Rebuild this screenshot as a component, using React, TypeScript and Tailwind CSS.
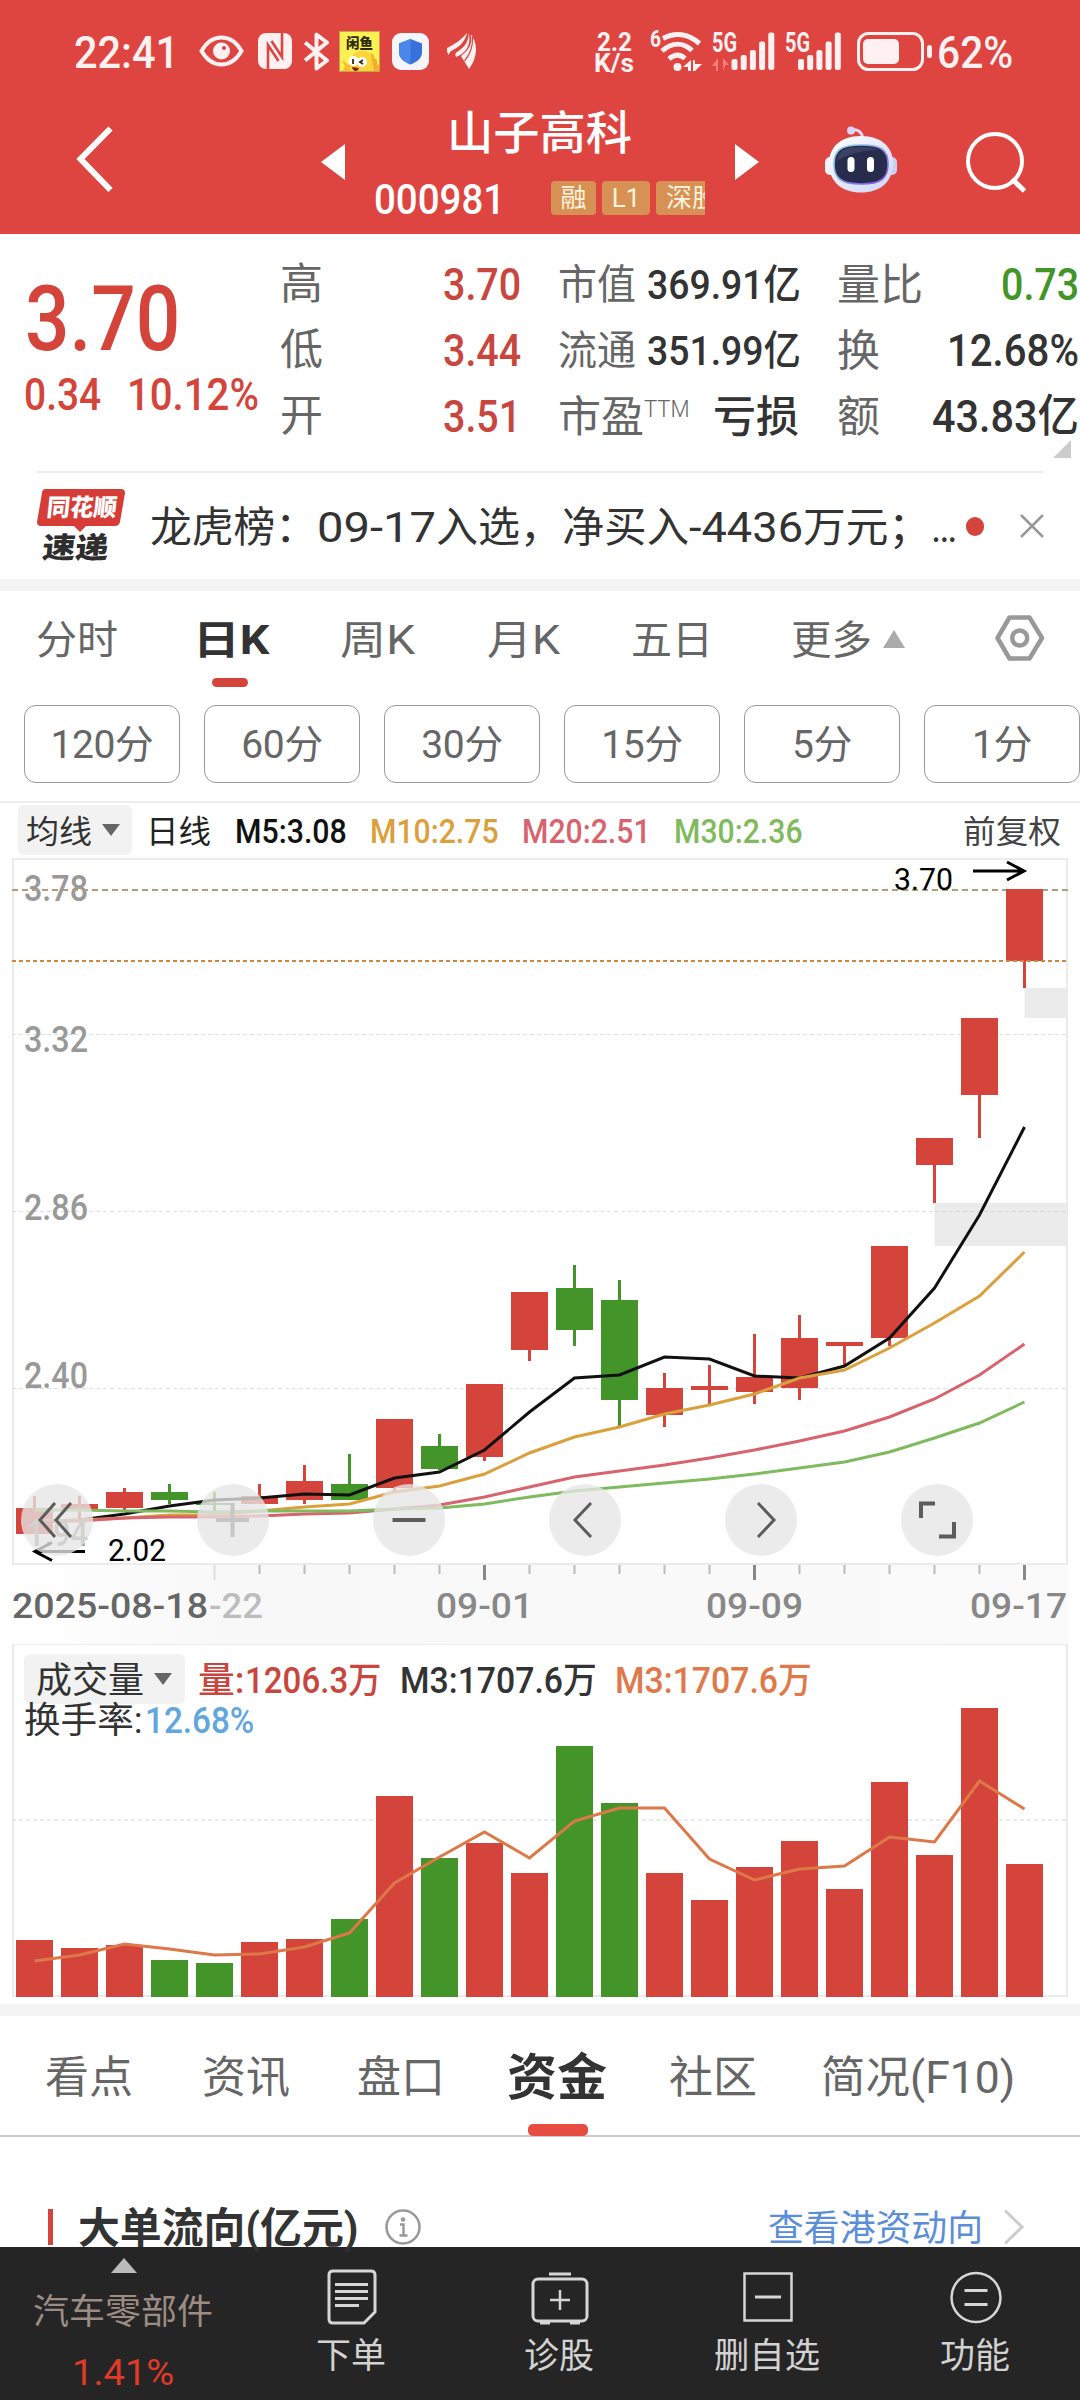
import React, { useLayoutEffect, useRef, useState } from 'react'

interface fitProps {
    className?: string;
    children: React.ReactNode;
}

// squeezes a single line of text into the width of its box
const Fit: React.FC<fitProps> = ({ className, children }) => {
    const box = useRef<HTMLSpanElement>(null);
    const text = useRef<HTMLSpanElement>(null);
    const [scale, setScale] = useState(1);

    useLayoutEffect(() => {
        if (box.current && text.current) {
            setScale(box.current.clientWidth / text.current.offsetWidth);
        }
    }, []);

    return (
        <span ref={box} className={`block shrink-0 whitespace-nowrap ${className}`}>
            <span ref={text} className="relative top-[1.5px] -left-px inline-block origin-left" style={{ transform: `scaleX(${scale})` }}>
                {children}
            </span>
        </span>
    );
};

const RED = '#d5443a';
const GREEN = '#43952a';

// open/close body top and bottom, then wick top and bottom
const candles = [
    { up: true, top: 1508, bottom: 1534, high: 1496, low: 1534 },
    { up: true, top: 1504, bottom: 1510, high: 1496, low: 1522 },
    { up: true, top: 1492, bottom: 1508, high: 1488, low: 1510 },
    { up: false, top: 1492, bottom: 1500, high: 1484, low: 1504 },
    { up: false, top: 1503, bottom: 1505, high: 1492, low: 1511 },
    { up: true, top: 1496, bottom: 1504, high: 1484, low: 1504 },
    { up: true, top: 1481, bottom: 1500, high: 1465, low: 1504 },
    { up: false, top: 1484, bottom: 1500, high: 1454, low: 1500 },
    { up: true, top: 1419, bottom: 1488, high: 1419, low: 1491 },
    { up: false, top: 1446, bottom: 1469, high: 1434, low: 1470 },
    { up: true, top: 1384, bottom: 1457, high: 1384, low: 1461 },
    { up: true, top: 1292, bottom: 1350, high: 1292, low: 1361 },
    { up: false, top: 1288, bottom: 1330, high: 1265, low: 1346 },
    { up: false, top: 1300, bottom: 1400, high: 1280, low: 1427 },
    { up: true, top: 1388, bottom: 1415, high: 1373, low: 1427 },
    { up: true, top: 1386, bottom: 1390, high: 1365, low: 1404 },
    { up: true, top: 1377, bottom: 1392, high: 1334, low: 1404 },
    { up: true, top: 1338, bottom: 1388, high: 1315, low: 1400 },
    { up: true, top: 1342, bottom: 1346, high: 1342, low: 1367 },
    { up: true, top: 1246, bottom: 1338, high: 1246, low: 1346 },
    { up: true, top: 1138, bottom: 1165, high: 1138, low: 1203 },
    { up: true, top: 1018, bottom: 1095, high: 1018, low: 1138 },
    { up: true, top: 889, bottom: 961, high: 889, low: 988 },
];

const averages = [
    { color: '#111111', points: [1522, 1520, 1514, 1506, 1500, 1498, 1494, 1495, 1478, 1472, 1450, 1412, 1378, 1375, 1357, 1359, 1376, 1378, 1366, 1338, 1288, 1215, 1127] },
    { color: '#dba03c', points: [1521, 1520, 1518, 1515, 1515, 1511, 1507, 1504, 1492, 1486, 1474, 1453, 1437, 1427, 1414, 1405, 1394, 1378, 1370, 1348, 1323, 1296, 1252] },
    { color: '#d8636f', points: [1521, 1521, 1518, 1517, 1517, 1516, 1514, 1513, 1509, 1505, 1497, 1487, 1477, 1471, 1465, 1458, 1450, 1441, 1431, 1417, 1399, 1375, 1344] },
    { color: '#7fbb5e', points: [1510, 1510, 1511, 1511, 1512, 1511, 1511, 1511, 1509, 1508, 1504, 1497, 1491, 1487, 1483, 1479, 1474, 1468, 1462, 1452, 1438, 1423, 1402] },
];

const volumes = [1940, 1948, 1945, 1960, 1963, 1942, 1939, 1919, 1796, 1858, 1843, 1873, 1746, 1803, 1873, 1900, 1867, 1841, 1889, 1782, 1855, 1708, 1864];
const volumeLine = [1961, 1955, 1944, 1949, 1955, 1954, 1947, 1933, 1883, 1857, 1832, 1858, 1821, 1808, 1808, 1859, 1880, 1869, 1866, 1837, 1842, 1781, 1809];

const center = (i: number) => 34.5 + i * 45;
const toPoints = (list: number[]) => list.map((y, i) => `${center(i)},${y}`).join(' ');

const Signal = ({ dim }: { dim?: boolean }) => (
    <svg width={dim ? 62 : 56} height="40" viewBox={dim ? '0 0 62 40' : '0 0 56 40'} fill="#fff1f1" className="shrink-0 overflow-visible">
        <text x="0" y="21" fontSize="27" fontWeight="700" textLength="25" lengthAdjust="spacingAndGlyphs">5G</text>
        {dim && <path fill="#f07f7d" d="M6 27v13h-2v-5H0zM11 27l6 7h-3v-1l-3 7z" />}
        <g transform={dim ? 'translate(19.5 0)' : 'translate(13 0)'}>
            <rect x="0" y="28" width="6" height="11" rx="2" />
            <rect x="9.2" y="24" width="6" height="15" rx="2" />
            <rect x="18.4" y="19" width="6" height="20" rx="2" />
            <rect x="27.6" y="10.5" width="6" height="28.5" rx="2" />
            <rect x="36.8" y="1.5" width="6" height="37.5" rx="2" />
        </g>
    </svg>
);

const StatusBar = () => (
    <div className="flex h-[102px] items-center pl-[75px] text-[#fff1f1]">
        <Fit className="w-[105px] text-[45px] leading-[60px] font-medium">22:41</Fit>
        <svg width="45" height="32" viewBox="0 0 45 32" className="ml-[19px] shrink-0">
            <path d="M2.5 16C8 6.5 15 2.5 22.5 2.5S37 6.5 42.5 16C37 25.5 30 29.5 22.5 29.5S8 25.5 2.5 16z" fill="none" stroke="#fff1f1" strokeWidth="4" />
            <circle cx="22.5" cy="16" r="8.5" fill="#fff1f1" />
            <circle cx="25" cy="13" r="2" fill="#de4440" />
        </svg>
        <svg width="34" height="36" viewBox="0 0 34 36" className="ml-[14px] shrink-0">
            <rect width="34" height="36" rx="8" fill="#fff1f1" />
            <path d="M10 36V12L20.5 28M24 0V24L13.5 8" fill="none" stroke="#de4440" strokeWidth="2.6" />
        </svg>
        <svg width="26" height="39" viewBox="0 0 26 39" fill="none" stroke="#fff1f1" strokeWidth="4" strokeLinejoin="round" className="ml-[12px] shrink-0">
            <path d="M1 10.5l22 18L12.5 36.500v-34L23 10.5 1 28.500" />
        </svg>
        <div className="relative ml-[9px] h-[41px] w-[41px] shrink-0 overflow-hidden border border-[#c9a24a] bg-[#fdf052]">
            <Fit className="ml-[7px] w-[27px] text-[14px] leading-[20px] font-black text-[#2c2a10]">闲鱼</Fit>
            <svg width="41" height="41" viewBox="0 0 41 41" className="absolute -top-px -left-px">
                <path d="M10 41C9 30 12 21 23 19.5 32 20 38 27 39 41z" fill="#fbd437" />
                <path d="M32 22l3 2v3l3 2v4l3 2v6h-6z" fill="#f6ae2e" />
                <path d="M3 30c3 0 5 3 8 5v6H3l3-6z" fill="#f8bc30" />
                <circle cx="14.5" cy="30" r="5" fill="#fff" />
                <circle cx="23" cy="31" r="5" fill="#fff" />
                <path d="M14 28v5M24 29l-3 2 3 2" stroke="#33270d" strokeWidth="1.8" fill="none" />
                <path d="M13 36l7 1c-1 4-6 4-7-1z" fill="#7c1d0c" />
            </svg>
        </div>
        <svg width="37" height="37" viewBox="0 0 37 37" className="ml-[12px] shrink-0">
            <rect width="37" height="37" rx="9" fill="#f5f6fb" />
            <path d="M18.5 6L30 10.5v9C30 25 25 29 18.5 31.5 12 29 7 25 7 19.5v-9z" fill="#3671dc" />
            <path d="M18.5 6v25.5C12 29 7 25 7 19.5v-9z" fill="#4a87ea" />
        </svg>
        <svg width="30" height="36" viewBox="0 0 30 36" className="ml-[18px] shrink-0" fill="#fff1f1">
            <path d="M0 15C8 11 14 7 20 0 18 9 12 14 6 17c-3 1-4 3-4 5C0 20-.5 17 0 15z" />
            <path d="M21.500 0C22 8 18 14 10 19c-2 1-2 3-1 5C18 21 25 12 21.500 0z" />
            <path d="M23.500 1C26 10 22 17 14 23l8 13c8-11 10-25 1.500-35z" />
            <path d="M25.500 4c.5 10-2 17-8 24" stroke="#de4440" strokeWidth="1.2" fill="none" />
        </svg>
        <div className="ml-[118px] w-[39px] shrink-0 text-[25px] leading-[21px] font-bold">
            <Fit className="ml-[3px] w-[35px]">2.2</Fit>
            <Fit className="w-[40px]">K/s</Fit>
        </div>
        <svg width="52" height="41" viewBox="0 0 52 41" className="ml-[16px] shrink-0 overflow-visible" fill="none" stroke="#fff1f1" strokeWidth="5">
            <text x="0" y="16" fontSize="23" fontWeight="700" stroke="none" fill="#fff1f1" textLength="11" lengthAdjust="spacingAndGlyphs">6</text>
            <path d="M13 7.5C25 1 38 2.500 49.500 12.500" />
            <path d="M12 20C22 11 33 11 42 19.500" />
            <path d="M19 28C24.500 23 30 23 35 27.500" />
            <circle cx="27.5" cy="36" r="4" fill="#fff1f1" stroke="none" />
            <path d="M41 29v11h-3v-4h-5zM43 29h2v4h7l-7 7h-2z" fill="#fff1f1" stroke="none" />
        </svg>
        <div className="ml-[10px] flex">
            <Signal dim />
        </div>
        <div className="ml-[11px] flex">
            <Signal />
        </div>
        <svg width="75" height="39" viewBox="0 0 75 39" className="ml-[16px] shrink-0">
            <rect x="1.5" y="1.5" width="64" height="36" rx="10" fill="none" stroke="#fff1f1" strokeWidth="3" />
            <rect x="6" y="7" width="36" height="25" rx="5" fill="#fff1f1" />
            <rect x="70" y="13" width="5" height="13" rx="2.5" fill="#fff1f1" />
        </svg>
        <Fit className="ml-[6px] w-[76px] text-[45px] leading-[60px] font-medium">62%</Fit>
    </div>
);

const Robot = () => (
    <svg width="72" height="68" viewBox="0 0 72 68" className="shrink-0">
        <defs>
            <linearGradient id="shell" x1="0" y1="0" x2="1" y2="1">
                <stop offset="0" stopColor="#ffffff" />
                <stop offset="1" stopColor="#cdd3f4" />
            </linearGradient>
            <linearGradient id="rim" x1="0" y1="0" x2="1" y2="1">
                <stop offset="0" stopColor="#8fe0e8" />
                <stop offset="1" stopColor="#7a4be0" />
            </linearGradient>
        </defs>
        <path d="M27 4c6-1 10 2 10.500 8" fill="none" stroke="#e6dcf6" strokeWidth="3" />
        <circle cx="26" cy="4.5" r="4" fill="#dcd3f6" />
        <rect x="0" y="31" width="11" height="18" rx="5" fill="#eef0fd" />
        <rect x="61" y="31" width="11" height="18" rx="5" fill="#c9cff0" />
        <path d="M36 10C56 10 68 21 68 37 68 56 55 66.500 36 66.500S4 56 4 37C4 21 16 10 36 10z" fill="url(#shell)" />
        <path d="M36 19C56 19 63 24 63 38S56 58 36 58 9 52 9 38 16 19 36 19z" fill="#272c4d" stroke="url(#rim)" strokeWidth="1.6" />
        <path d="M12 35C13 24 20 21 36 21c6 0 13 1 17 3-16 0-30 4-41 11z" fill="#4a5071" opacity=".6" />
        <rect x="22.5" y="31" width="7" height="15" rx="3.5" fill="#fff" />
        <rect x="42" y="31" width="7" height="15" rx="3.5" fill="#fff" />
    </svg>
);

const TitleBar = () => (
    <div className="flex h-[132px] items-start text-white">
        <svg width="40" height="70" viewBox="0 0 40 70" className="mt-[22px] ml-[75px] shrink-0" fill="none" stroke="#fff" strokeWidth="6">
            <path d="M35.500 4.500L5.500 35 35.500 66" />
        </svg>
        <svg width="24" height="36" viewBox="0 0 24 36" className="mt-[42px] ml-[206px] shrink-0" fill="#fff">
            <path d="M24 0v36L0 18z" />
        </svg>
        <div className="ml-[30px] w-[330px] shrink-0">
            <Fit className="ml-[73px] w-[185px] text-[46px] leading-[58px] font-medium">山子高科</Fit>
            <div className="mt-[9px] flex h-[58px] items-center">
                <Fit className="w-[131px] text-[42px] leading-[58px] font-medium">000981</Fit>
                <div className="ml-[45px] flex w-[154px] gap-[6px] overflow-hidden text-[26px] leading-[34px] whitespace-nowrap text-[#fff3df]">
                    <span className="w-[45px] shrink-0 rounded-[4px] bg-[#d79154] text-center">融</span>
                    <span className="w-[48px] shrink-0 rounded-[4px] bg-[#d79154] text-center">L1</span>
                    <span className="w-[98px] shrink-0 rounded-[4px] bg-[#d79154] pl-[10px]">深股通</span>
                </div>
            </div>
        </div>
        <svg width="24" height="36" viewBox="0 0 24 36" className="mt-[42px] ml-[30px] shrink-0" fill="#fff">
            <path d="M0 0v36l24-18z" />
        </svg>
        <div className="mt-[24px] ml-[66px]">
            <Robot />
        </div>
        <svg width="62" height="64" viewBox="0 0 62 64" className="mt-[28px] ml-[68px] shrink-0" fill="none" stroke="#fff" strokeWidth="4">
            <circle cx="30" cy="31" r="27" />
            <path d="M47 49l12.500 12" strokeWidth="5" />
        </svg>
    </div>
);

const Quote = () => (
    <div className="flex h-[237px] text-[#333]">
        <div className="ml-[24px] w-[256px] shrink-0 text-[#d5443a]">
            <Fit className="mt-[34px] ml-[2px] w-[155px] text-[90px] leading-[100px] font-medium">3.70</Fit>
            <div className="-mt-[4px] flex text-[45px] leading-[58px] font-medium">
                <Fit className="ml-px w-[77px]">0.34</Fit>
                <Fit className="ml-[26px] w-[132px]">10.12%</Fit>
            </div>
        </div>
        <div className="mt-[17px] w-[43px] shrink-0 text-[43px] leading-[66px] text-[#666]">
            <p>高</p>
            <p>低</p>
            <p>开</p>
        </div>
        <div className="mt-[16px] ml-[121px] w-[77px] shrink-0 text-[45px] leading-[66px] font-medium text-[#c9463e]">
            <Fit className="w-[78px]">3.70</Fit>
            <Fit className="w-[78px]">3.44</Fit>
            <Fit className="w-[78px]">3.51</Fit>
        </div>
        <div className="mt-[16px] ml-[38px] w-[243px] shrink-0 text-[41px] leading-[66px] font-medium">
            <div className="flex justify-between">
                <Fit className="w-[78px] font-normal text-[#666]">市值</Fit>
                <Fit className="w-[154px]">369.91亿</Fit>
            </div>
            <div className="flex justify-between">
                <Fit className="w-[78px] font-normal text-[#666]">流通</Fit>
                <Fit className="w-[154px]">351.99亿</Fit>
            </div>
            <div className="flex text-[43px]">
                <Fit className="w-[86px] font-normal text-[#666]">市盈</Fit>
                <Fit className="h-[50px] w-[46px] text-[24px] leading-[51px] font-light text-[#666]">TTM</Fit>
                <Fit className="ml-[23px] w-[86px]">亏损</Fit>
            </div>
        </div>
        <div className="mt-[16px] ml-[36px] w-[242px] shrink-0 text-[43px] leading-[66px] font-medium">
            <div className="flex justify-between">
                <Fit className="w-[86px] font-normal text-[#666]">量比</Fit>
                <Fit className="w-[78px] text-[45px] text-[#43952a]">0.73</Fit>
            </div>
            <div className="flex justify-between">
                <Fit className="w-[43px] font-normal text-[#666]">换</Fit>
                <Fit className="w-[132px] text-[45px]">12.68%</Fit>
            </div>
            <div className="flex justify-between">
                <Fit className="w-[43px] font-normal text-[#666]">额</Fit>
                <Fit className="w-[147px] text-[45px]">43.83亿</Fit>
            </div>
            <svg width="18" height="18" viewBox="0 0 18 18" className="mt-[-8px] ml-[215px]" fill="#ccc">
                <path d="M18 0v18H0z" />
            </svg>
        </div>
    </div>
);

const News = () => (
    <div className="mx-[36px] flex h-[108px] items-center border-t-2 border-[#eee]">
        <div className="relative h-[74px] w-[90px] shrink-0">
            <svg width="90" height="46" viewBox="0 0 90 46" className="absolute top-0 left-0" fill="#d63d37">
                <path d="M10 0h75q4 0 4 4l-5 29q-1 4-5 4H50l-6 6-6-6H5q-4 0-4-4L6 4q0-4 4-4z" />
            </svg>
            <div className="relative -skew-x-6 pt-[4px] pl-[10px]">
                <Fit className="w-[70px] text-[24px] leading-[26px] font-black text-white">同花顺</Fit>
                <Fit className="mt-[11px] w-[66px] text-[29px] leading-[32px] font-black text-[#2e2e2e]">速递</Fit>
            </div>
        </div>
        <div className="ml-[25px] flex text-[42px] leading-[60px] text-[#333]">
            <Fit className="w-[167px]">龙虎榜：</Fit>
            <Fit className="w-[119px]">09-17</Fit>
            <Fit className="w-[126px]">入选，</Fit>
            <Fit className="w-[127px]">净买入</Fit>
            <Fit className="w-[114px]">-4436</Fit>
            <Fit className="w-[128px]">万元；</Fit>
            <Fit className="w-[26px]">…</Fit>
        </div>
        <span className="ml-[8px] h-[19px] w-[18px] shrink-0 rounded-full bg-[#d5443a]"></span>
        <svg width="24" height="24" viewBox="0 0 24 24" className="ml-[36px] shrink-0" stroke="#999" strokeWidth="2.5">
            <path d="M1 1l22 22M23 1L1 23" />
        </svg>
    </div>
);

const PeriodTabs = () => (
    <div className="flex h-[98px] pl-[37px] text-[40px] leading-[96px] text-[#666]">
        <Fit className="w-[82px]">分时</Fit>
        <div className="ml-[75px] w-[74px] shrink-0">
            <Fit className="w-[76px] font-bold text-[#333]">日K</Fit>
            <div className="mt-[-9px] ml-[18px] h-[9px] w-[36px] rounded-full bg-[#d5443a]"></div>
        </div>
        <Fit className="ml-[73px] w-[75px]">周K</Fit>
        <Fit className="ml-[72px] w-[73px]">月K</Fit>
        <Fit className="ml-[71px] w-[82px]">五日</Fit>
        <Fit className="ml-[78px] w-[81px]">更多</Fit>
        <svg width="22" height="18" viewBox="0 0 22 18" className="mt-[39px] ml-[10px] shrink-0" fill="#aaa">
            <path d="M11 0l11 18H0z" />
        </svg>
        <svg width="50" height="46" viewBox="0 0 50 46" className="mt-[24px] ml-[90px] shrink-0" fill="none" stroke="#999" strokeWidth="4.500" strokeLinejoin="round">
            <path d="M14.500 2.500h20L47 23 34.500 43.500h-20L2.500 23z" />
            <circle cx="24.700" cy="23" r="7.500" />
        </svg>
    </div>
);

const MinuteTabs = () => {
    const items = ['120分', '60分', '30分', '15分', '5分', '1分'];

    return (
        <div className="mt-[16px] flex h-[78px] gap-6 pl-6">
            {items.map((item) => (
                <div key={item} className="flex w-[156px] shrink-0 items-center justify-center rounded-[12px] border border-[#999] pt-[3px] text-[39px] tracking-[-0.5px] text-[#666]">
                    {item}
                </div>
            ))}
        </div>
    );
};

const Legend = () => (
    <div className="mt-[18px] flex h-[57px] items-center border-t-2 border-[#eee] pb-px pl-[18px] text-[33px] leading-[50px] font-medium">
        <div className="flex h-[50px] w-[114px] shrink-0 items-center rounded-[6px] bg-[#f2f2f2] pl-[9px]">
            <Fit className="w-[66px] text-[32px] font-normal text-[#333]">均线</Fit>
            <svg width="18" height="12" viewBox="0 0 18 12" className="ml-[9px]" fill="#666">
                <path d="M0 0h18L9 12z" />
            </svg>
        </div>
        <Fit className="ml-[15px] w-[65px] text-[32px] font-normal text-[#222]">日线</Fit>
        <Fit className="ml-[24px] w-[112px] text-[#111]">M5:3.08</Fit>
        <Fit className="ml-[23px] w-[129px] text-[#dba03c]">M10:2.75</Fit>
        <Fit className="ml-[23px] w-[129px] text-[#d8636f]">M20:2.51</Fit>
        <Fit className="ml-[23px] w-[129px] text-[#7fbb5e]">M30:2.36</Fit>
        <Fit className="ml-[160px] w-[98px] text-[32px] font-normal text-[#444]">前复权</Fit>
    </div>
);

const KChart = () => {
    const grid = [1034.5, 1211.5, 1388.5];
    const prices = [
        { label: '3.78', y: 901 },
        { label: '3.32', y: 1052 },
        { label: '2.86', y: 1220 },
        { label: '2.40', y: 1388 },
    ];
    const dates = [
        { label: '09-01', x: 436 },
        { label: '09-09', x: 706 },
        { label: '09-17', x: 970 },
    ];
    const tools = [
        <path d="M-2 -17L-17 0-2 17M14-17L-1 0 14 17" strokeWidth="3" />,
        <path d="M-17 0H16M-.5-17V17" stroke="#c6c6c6" />,
        <path d="M-16.500 0H16.500" />,
        <path d="M6-17L-10 0 6 17" strokeWidth="3" />,
        <path d="M-3-17L13 0-3 17" strokeWidth="3" />,
        <path d="M-16-2V-16.500H-2M2 16.500H17V2" />,
    ];

    return (
        <svg width="1080" height="786" viewBox="0 858 1080 786" className="block">
            <defs>
                <linearGradient id="axis" x1="0" x2="1">
                    <stop offset="0" stopColor="#f8f8f8" stopOpacity="0" />
                    <stop offset=".2" stopColor="#f8f8f8" />
                    <stop offset="1" stopColor="#fafafa" />
                </linearGradient>
            </defs>
            <rect x="12" y="1565" width="1056" height="79" fill="url(#axis)" />
            <rect x="13" y="859" width="1054" height="705" fill="none" stroke="#ebebeb" strokeWidth="2" />
            {grid.map((y) => (
                <path key={y} d={`M12 ${y}H1068`} stroke="#dedede" strokeWidth="1" strokeDasharray="4 3" />
            ))}
            <rect x="1024.5" y="988" width="43.5" height="30" fill="#ebebeb" />
            <rect x="934.5" y="1203" width="133.5" height="43" fill="#ebebeb" />
            <path d="M935 1211.500H1068" stroke="#d6d6d6" strokeDasharray="4 3" />
            {prices.map((p) => (
                <text key={p.label} x="24" y={p.y} fontSize="36" fontWeight="500" fill="#999" textLength="64" lengthAdjust="spacingAndGlyphs">{p.label}</text>
            ))}
            <path d="M12 890H1068" stroke="#b0a078" strokeWidth="2" strokeDasharray="6 4" />
            {candles.map((c, i) => (
                <g key={i} fill={c.up ? RED : GREEN}>
                    <rect x={center(i) - 1.5} y={c.high} width="3" height={c.low - c.high} />
                    <rect x={center(i) - 18.5} y={c.top} width="37" height={c.bottom - c.top} />
                </g>
            ))}
            <path d="M12 961H1068" stroke="#d0863f" strokeWidth="2" strokeDasharray="4 3" />
            {averages.map((a) => (
                <polyline key={a.color} points={toPoints(a.points)} fill="none" stroke={a.color} strokeWidth="3" />
            ))}
            <text x="27" y="1546" fontSize="36" fontWeight="500" fill="#8c8c8c" textLength="61" lengthAdjust="spacingAndGlyphs">1.94</text>
            <text x="894" y="889.5" fontSize="32" fill="#000" textLength="59" lengthAdjust="spacingAndGlyphs">3.70</text>
            <path d="M973 871H1024M1007 862l17 9-17 9" fill="none" stroke="#000" strokeWidth="3" />
            <text x="108" y="1560.5" fontSize="32" fill="#000" textLength="58" lengthAdjust="spacingAndGlyphs">2.02</text>
            <path d="M85 1551.500H35M52 1542.500l-17 9 17 9" fill="none" stroke="#000" strokeWidth="3" />
            {tools.map((tool, i) => (
                <g key={i} transform={`translate(${57 + i * 176} 1520)`}>
                    <circle r="36" fill="#e6e6e6" opacity=".78" />
                    <g fill="none" stroke="#5c5c5c" strokeWidth="4">{tool}</g>
                </g>
            ))}
            {candles.slice(5).map((_, i) => (
                <path key={i} d={`M${center(i + 5)} 1565V1574`} stroke="#bbb" strokeWidth="2" />
            ))}
            <path d="M214.500 1565V1580" stroke="#ddd" strokeWidth="2" />
            <path d="M484.500 1565V1580M754.500 1565V1580M1024.500 1565V1580" stroke="#888" strokeWidth="3" />
            <g fontSize="35" fontWeight="500">
                <text x="12" y="1618" fill="#666" textLength="196" lengthAdjust="spacingAndGlyphs">2025-08-18</text>
                <text x="209" y="1618" fill="#bdbdbd" textLength="54" lengthAdjust="spacingAndGlyphs">-22</text>
                {dates.map((d) => (
                    <text key={d.label} x={d.x} y="1618" fill="#888" textLength="97" lengthAdjust="spacingAndGlyphs">{d.label}</text>
                ))}
            </g>
        </svg>
    );
};

const VolumeChart = () => (
    <div className="relative h-[360px]">
        <svg width="1080" height="360" viewBox="0 1644 1080 360" className="absolute top-0 left-0">
            <rect x="13" y="1644" width="1054" height="352" fill="none" stroke="#ebebeb" strokeWidth="2" />
            <path d="M12 1820H1068" stroke="#e4e4e4" strokeWidth="1.5" strokeDasharray="4 3" />
            {volumes.map((y, i) => (
                <rect key={i} x={center(i) - 18.5} y={y} width="37" height={1997 - y} fill={candles[i].up ? RED : GREEN} />
            ))}
            <polyline points={toPoints(volumeLine)} fill="none" stroke="#dd7848" strokeWidth="3" />
        </svg>
        <div className="relative flex items-center pt-[10px] pl-[24px] text-[36px] leading-[50px] font-medium">
            <div className="flex h-[50px] w-[161px] shrink-0 items-center rounded-[6px] bg-[#f2f2f2] pl-[13px]">
                <Fit className="w-[108px] font-normal text-[#333]">成交量</Fit>
                <svg width="18" height="12" viewBox="0 0 18 12" className="ml-[9px]" fill="#666">
                    <path d="M0 0h18L9 12z" />
                </svg>
            </div>
            <Fit className="ml-[14px] w-[47px] text-[#c9463e]">量:</Fit>
            <Fit className="w-[136px] text-[#c9463e]">1206.3万</Fit>
            <Fit className="ml-[19px] w-[197px] text-[#333]">M3:1707.6万</Fit>
            <Fit className="ml-[18px] w-[197px] text-[#e0794a]">M3:1707.6万</Fit>
        </div>
        <div className="relative -mt-[8px] flex pl-[25px] text-[36px] leading-[46px] font-medium">
            <Fit className="w-[119px] font-normal text-[#333]">换手率:</Fit>
            <Fit className="ml-[2px] w-[109px] text-[#62a6e0]">12.68%</Fit>
        </div>
    </div>
);

const InfoTabs = () => (
    <div className="flex h-[121px] border-b-2 border-[#ccc] pl-[46px] text-[44px] leading-[120px] text-[#666]">
        <Fit className="w-[88px]">看点</Fit>
        <Fit className="ml-[69px] w-[88px]">资讯</Fit>
        <Fit className="ml-[67px] w-[88px]">盘口</Fit>
        <div className="ml-[62px] w-[100px] shrink-0">
            <Fit className="w-[100px] text-[50px] font-bold text-[#333]">资金</Fit>
            <div className="mt-[-12px] ml-[20px] h-[12px] w-[60px] rounded-[5px] bg-[#e64c3f]"></div>
        </div>
        <Fit className="ml-[62px] w-[88px]">社区</Fit>
        <Fit className="ml-[64px] w-[194px]">简况(F10)</Fit>
    </div>
);

const FlowHead = () => (
    <div className="flex h-[110px] items-end">
        <div className="flex h-[40px] items-center">
            <span className="ml-[48px] h-[36px] w-[5px] bg-[#d5443a]"></span>
            <Fit className="ml-[26px] w-[280px] text-[42px] leading-[38px] font-bold text-[#333]">大单流向(亿元)</Fit>
            <svg width="38" height="38" viewBox="0 0 38 38" className="ml-[25px] shrink-0" fill="none" stroke="#999" strokeWidth="2.5">
                <circle cx="19" cy="19" r="16.5" />
                <path d="M16 16.500h3.500V27M15.500 27.500h8" />
                <circle cx="19" cy="11.5" r="2.2" fill="#999" stroke="none" />
            </svg>
            <Fit className="ml-[347px] w-[215px] text-[36px] leading-[38px] text-[#5b8ed8]">查看港资动向</Fit>
            <svg width="22" height="36" viewBox="0 0 22 36" className="ml-[19px] shrink-0" fill="none" stroke="#ccc" strokeWidth="3">
                <path d="M2 1.500L19 18 2 34.500" />
            </svg>
        </div>
    </div>
);

const BottomBar = () => (
    <div className="flex h-[153px] bg-[#252525] text-[35px] leading-[46px] text-[#d2d2d2]">
        <div className="flex w-[248px] shrink-0 flex-col items-center">
            <svg width="26" height="15" viewBox="0 0 26 15" className="mt-[11px]" fill="#bbb">
                <path d="M13 0l13 15H0z" />
            </svg>
            <Fit className="mt-[15px] w-[180px] text-[#9c8c84]">汽车零部件</Fit>
            <Fit className="mt-[14px] w-[102px] text-[37px] text-[#e03b28]">1.41%</Fit>
        </div>
        <div className="flex w-[208px] shrink-0 flex-col items-center">
            <svg width="50" height="56" viewBox="0 0 50 56" className="mt-[22px]" fill="none" stroke="#d6d6d6" strokeWidth="3">
                <path d="M6 2h38q4 0 4 4v37L37 54H6q-4 0-4-4V6q0-4 4-4z" />
                <path d="M8 15.500h33M8 22.500h33M8 29.500h33M8 36.500h24" />
            </svg>
            <Fit className="mt-[7px] w-[70px]">下单</Fit>
        </div>
        <div className="flex w-[208px] shrink-0 flex-col items-center">
            <svg width="58" height="56" viewBox="0 0 58 56" className="mt-[22px]" fill="none" stroke="#d6d6d6" strokeWidth="3">
                <path d="M18 5h22" />
                <rect x="2" y="10" width="54" height="42" rx="5" />
                <path d="M9 54h10M39 54h10" />
                <path d="M19 31h20M29 21v20" strokeWidth="2.5" />
            </svg>
            <Fit className="mt-[7px] w-[70px]">诊股</Fit>
        </div>
        <div className="flex w-[208px] shrink-0 flex-col items-center">
            <svg width="50" height="56" viewBox="0 0 50 56" className="mt-[22px]" fill="none" stroke="#d6d6d6" strokeWidth="2.5">
                <rect x="1.5" y="4.5" width="47" height="47" />
                <path d="M12 28h26" strokeWidth="3" />
            </svg>
            <Fit className="mt-[7px] w-[106px]">删自选</Fit>
        </div>
        <div className="flex w-[208px] shrink-0 flex-col items-center">
            <svg width="52" height="56" viewBox="0 0 52 56" className="mt-[22px]" fill="none" stroke="#d6d6d6" strokeWidth="2.5">
                <circle cx="26" cy="28.5" r="24.5" />
                <path d="M14.500 21.500h23M14.500 35.500h23" strokeWidth="3" />
            </svg>
            <Fit className="mt-[7px] w-[70px]">功能</Fit>
        </div>
    </div>
);

export default function App() {
    return (
        <div className="h-[2400px] w-[1080px] overflow-hidden bg-white font-[Roboto,'Noto_Sans_CJK_SC',sans-serif]">
            <div className="bg-[#de4440]">
                <StatusBar />
                <TitleBar />
            </div>
            <Quote />
            <News />
            <div className="h-[12px] bg-[#f4f4f4]"></div>
            <PeriodTabs />
            <MinuteTabs />
            <Legend />
            <KChart />
            <VolumeChart />
            <div className="h-[12px] bg-[#f4f4f4]"></div>
            <InfoTabs />
            <FlowHead />
            <BottomBar />
        </div>
    );
}
